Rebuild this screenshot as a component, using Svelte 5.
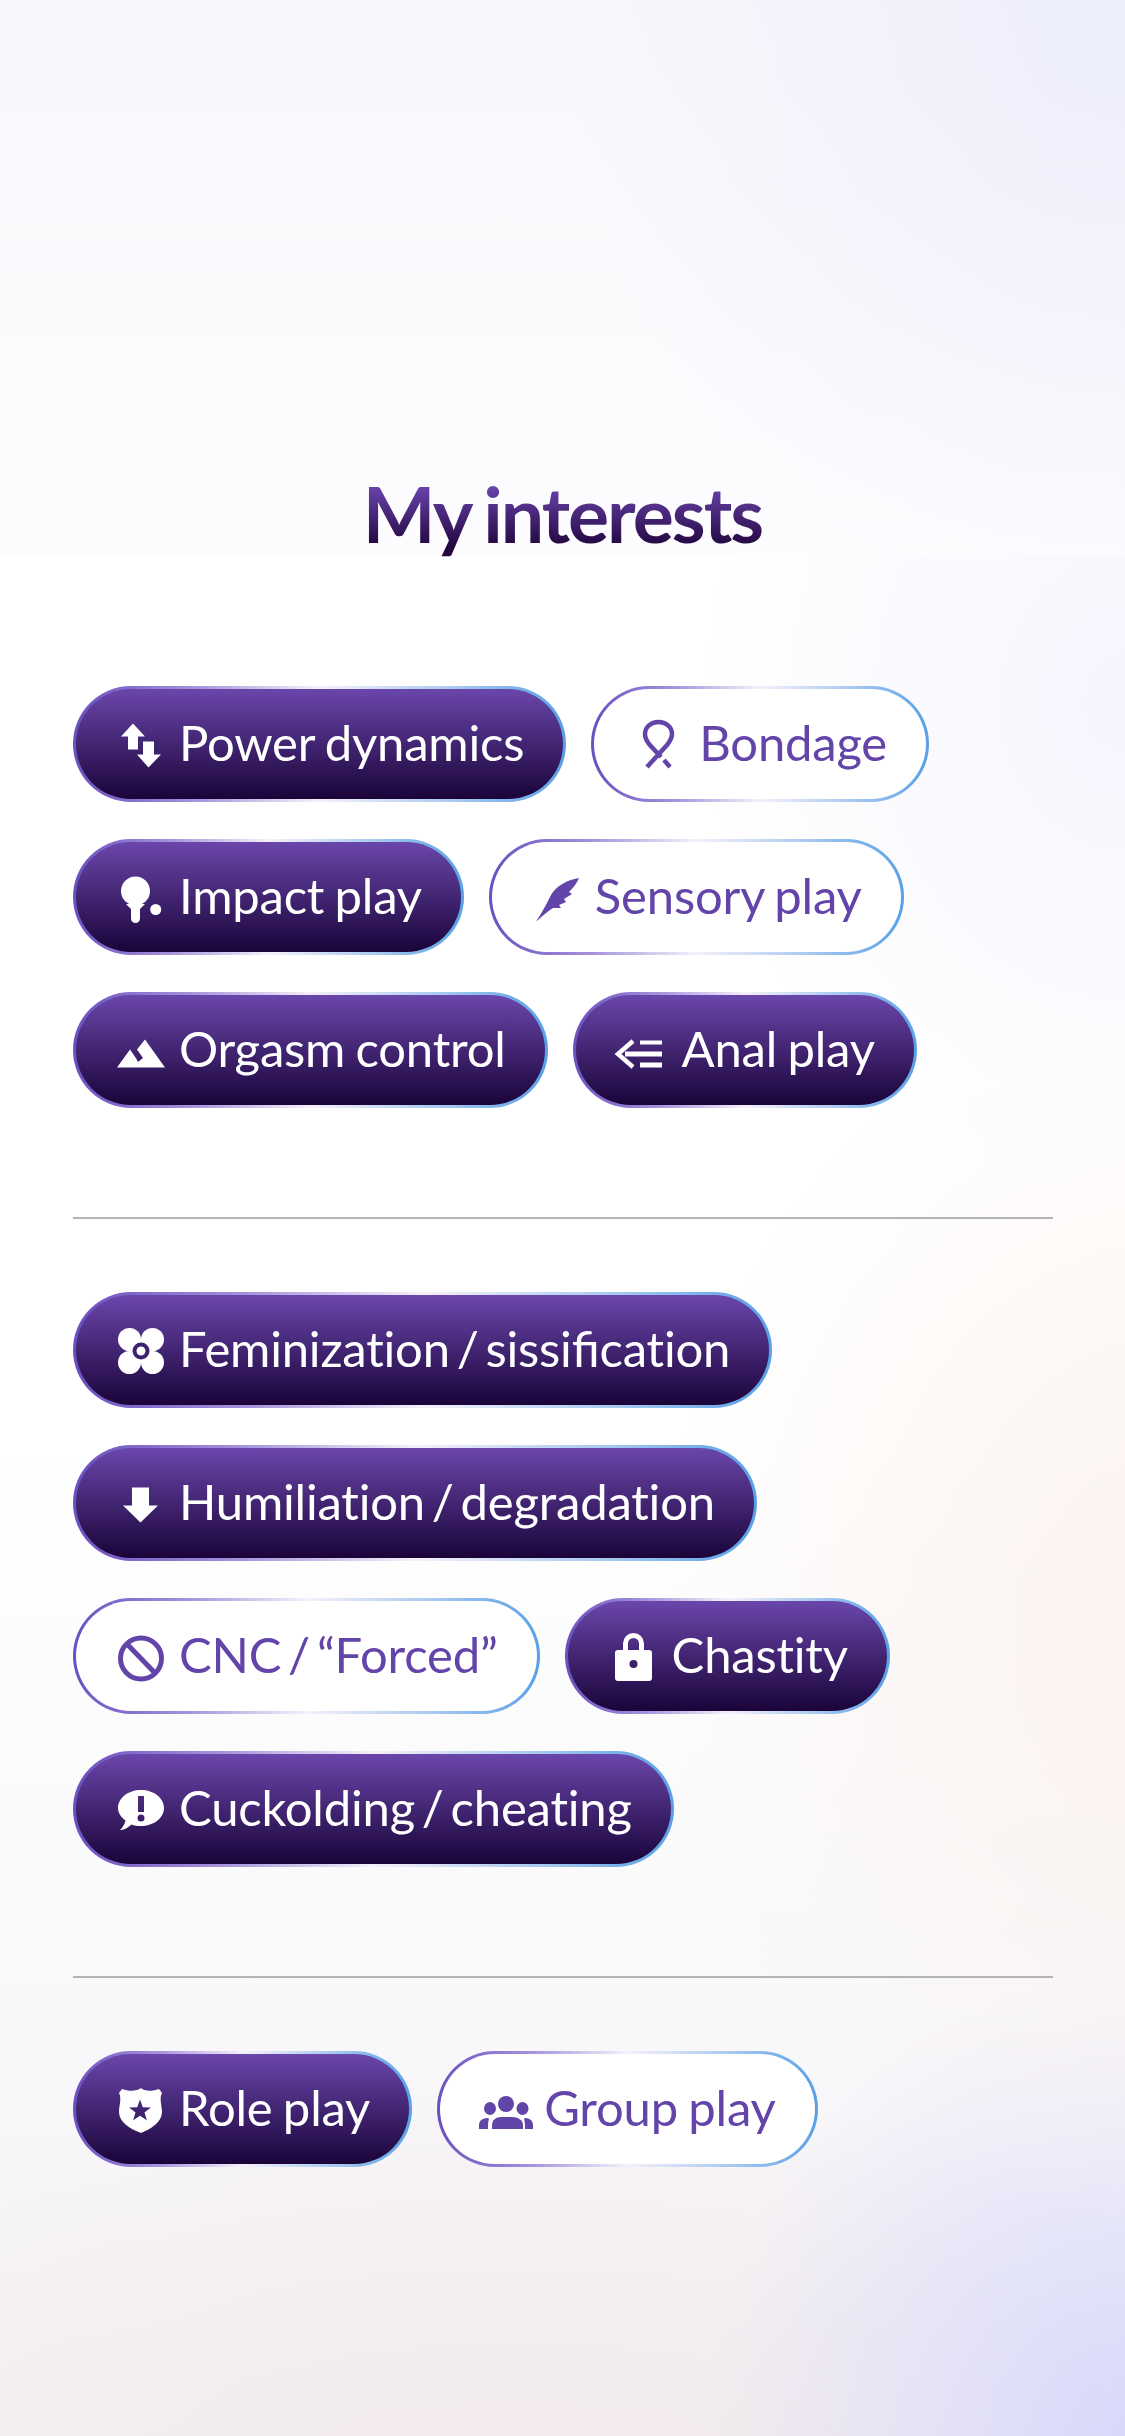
<script>
	const sections = [
		[
			{ label: 'Power dynamics', icon: 'power', w: 50, on: true },
			{ label: 'Bondage', icon: 'ribbon', w: 52, on: false },
			{ label: 'Impact play', icon: 'paddle', w: 50, on: true },
			{ label: 'Sensory play', icon: 'feather', w: 50, on: false },
			{ label: 'Orgasm control', icon: 'peaks', w: 50, on: true },
			{ label: 'Anal play', icon: 'anal', w: 53, on: true }
		],
		[
			{ label: 'Feminization / sissiﬁcation', icon: 'flower', w: 50, on: true },
			{ label: 'Humiliation / degradation', icon: 'down', w: 50, on: true },
			{ label: 'CNC / “Forced”', icon: 'ban', w: 50, on: false },
			{ label: 'Chastity', icon: 'lock', w: 51, on: true },
			{ label: 'Cuckolding / cheating', icon: 'bubble', w: 50, on: true }
		],
		[
			{ label: 'Role play', icon: 'shield', w: 50, on: true },
			{ label: 'Group play', icon: 'group', w: 51, on: false }
		]
	];
</script>

{#snippet glyph(name)}
	{#if name === 'power'}
		<path d="M18 4.5 30 17.5H23V30.5H13V17.5H6ZM28 22.5H39V35.5H46L33.5 48.5 22 35.5H28Z" />
	{:else if name === 'ribbon'}
		<path class="line" d="M14 48 34 26C38 21 39 18 39 15 39 8 33 3 25.5 3 18 3 12 8 12 15 12 18 13 21 16 25L28 38M31 41 37 48" />
	{:else if name === 'paddle'}
		<circle cx="20.5" cy="19" r="14.5" />
		<path d="M11 32H30L25 37V46.5A4.5 4.5 0 0 1 16 46.5V37Z" />
		<circle cx="40.7" cy="37.5" r="5.5" />
	{:else if name === 'feather'}
		<path d="M48 6C36 8 24 14 19 25 15 33 10 42 5 49.5 12 44 18 38 22 36L30 36 28 33 35 30 33 27 41 22 38 20C42 16 46 11 48 6Z" />
	{:else if name === 'peaks'}
		<path d="M2 42.5 15 24.5 21.5 34 23 37 28 33 22 24.5 30 14.5 50 42.5Z" />
	{:else if name === 'anal'}
		<path class="line" d="M18 16 3 29 18 42" />
		<path d="M25 15.5H47V19.5H25ZM10 26.5H47V31.5H10ZM25 37.5H47V42.5H25Z" />
	{:else if name === 'flower'}
		<circle cx="14.5" cy="14.5" r="11.5" />
		<circle cx="37.5" cy="14.5" r="11.5" />
		<circle cx="14.5" cy="37.5" r="11.5" />
		<circle cx="37.5" cy="37.5" r="11.5" />
		<circle cx="26" cy="26" r="12" />
		<circle class="ring" cx="26" cy="26" r="6.5" />
	{:else if name === 'down'}
		<path d="M17 9.5H34V27.5H43L25.5 44.5 8 27.5H17Z" />
	{:else if name === 'ban'}
		<circle class="line ban" cx="26" cy="27.5" r="20.5" />
		<path class="line ban" d="M12 13 40 42" />
	{:else if name === 'lock'}
		<path class="line lockbar" d="M18.5 20V12.5A8 8 0 0 1 34.5 12.5V20" />
		<path fill-rule="evenodd" d="M11 19H42A3 3 0 0 1 45 22V47A3 3 0 0 1 42 50H11A3 3 0 0 1 8 47V22A3 3 0 0 1 11 19ZM26.5 29A4 4 0 1 0 26.5 37 4 4 0 1 0 26.5 29Z" />
	{:else if name === 'bubble'}
		<path fill-rule="evenodd" d="M26 6C38.7 6 49 14 49 24 49 34 38.7 42 26 42 22.5 42 19.3 41.4 16.4 40.4 13 43.5 9 46 5 46 8 43 10 39.5 10.5 36.5 6 33.2 3 28.9 3 24 3 14 13.3 6 26 6ZM23 12V28H29V12ZM26 30.5A3.5 3.5 0 1 0 26 37.5 3.5 3.5 0 1 0 26 30.5Z" />
	{:else if name === 'shield'}
		<path fill-rule="evenodd" d="M26 4C29 7 36 8 44 5L47 9C44 14 47 22 47 28 47 38 36 45 26 49 15 45 4 38 4 28 4 22 7 14 4 9L7 5C15 8 22 7 26 4ZM25 15.5 22.2 23.2 14.1 23.4 20.5 28.5 18.2 36.3 25 31.7 31.8 36.3 29.5 28.5 35.9 23.4 27.8 23.2Z" />
	{:else if name === 'group'}
		<circle cx="27" cy="20" r="8" />
		<ellipse cx="11" cy="24.5" rx="6" ry="6.5" />
		<ellipse cx="43.5" cy="24.5" rx="6" ry="6.5" />
		<path d="M13 45V41C13 36 17 33 22 33H33C39 33 44 36 44 41V45Z" />
		<path d="M0 45V41C0 37 3 34 9 34 10 34 10 35 9.5 37 9 39 9 42 9 45ZM54 45V41C54 37 51 34 46 34 45 34 45 35 45.5 37 46 39 46 42 46 45Z" />
	{/if}
{/snippet}

<main class="page">
	<header class="top">
		<h1>My interests</h1>
	</header>

	<div class="content">
		{#each sections as tags, i}
			{#if i > 0}<hr />{/if}
			<ul class="tags">
				{#each tags as tag}
					<li class="tag" class:on={tag.on}>
						<svg width={tag.w} height="50" viewBox="0 0 {tag.w} 50" aria-hidden="true">
							{@render glyph(tag.icon)}
						</svg>
						<span class:slash={tag.label.includes('/')}>{tag.label}</span>
					</li>
				{/each}
			</ul>
		{/each}
	</div>
</main>

<style>
	:global(body) {
		background: #fff;
	}
	.page {
		width: 1125px;
		height: 2436px;
		overflow: hidden;
		font-family: Lato, 'Noto Sans', sans-serif;
		background:
			radial-gradient(520px 620px at 1180px 1620px, #fbf2ee 0%, rgba(251, 242, 238, 0) 100%),
			radial-gradient(420px 460px at 1125px 2436px, #d8d9fb 0%, rgba(216, 217, 251, 0) 100%),
			radial-gradient(900px 420px at 520px 2500px, #f2e9e9 0%, rgba(242, 233, 233, 0) 100%),
			radial-gradient(420px 500px at 1125px 700px, #f5f5fe 0%, rgba(245, 245, 254, 0) 100%),
			linear-gradient(180deg, #fff 0%, #fff 60%, #f4f2f6 100%);
	}
	.top {
		height: 557px;
		box-sizing: border-box;
		padding-top: 469px;
		background:
			radial-gradient(560px 620px at 1125px 0, #edeefc 0%, rgba(237, 238, 252, 0) 100%),
			linear-gradient(180deg, #f8f7fb 0%, #fdfcfe 100%);
	}
	h1 {
		margin: 0;
		text-align: center;
		font-size: 77px;
		line-height: 88px;
		font-weight: 700;
		letter-spacing: -2px;
		word-spacing: -3px;
		color: transparent;
		background: linear-gradient(180deg, #6b45ae 18%, #22073f 88%);
		-webkit-background-clip: text;
		background-clip: text;
	}
	.content {
		padding: 129px 72px 0 73px;
	}
	.tags {
		list-style: none;
		margin: 0;
		padding: 0;
		display: flex;
		flex-wrap: wrap;
		gap: 37px 25px;
		width: 900px;
	}
	hr {
		border: 0;
		height: 2px;
		background: #b4b4b6;
		margin: 109px 0 73px;
	}
	.tag {
		box-sizing: border-box;
		height: 116px;
		padding: 0 39px;
		display: flex;
		align-items: center;
		gap: 14px;
		border: 3px solid transparent;
		border-radius: 58px;
		font-size: 49px;
		font-variant-ligatures: none;
		letter-spacing: -0.2px;
		word-spacing: -2px;
		color: #6344a9;
		fill: #6344a9;
		background:
			linear-gradient(#fff, #fff) padding-box,
			linear-gradient(90deg, #6a4fc0 0%, #a594dc 25%, #f6f0fa 50%, #a6c8f0 78%, #58a0e6 100%) border-box;
	}
	.tag span {
		padding-bottom: 4px;
	}
	.tag span.slash {
		word-spacing: -5.5px;
	}
	.tag.on {
		color: #fff;
		fill: #fff;
		background:
			linear-gradient(180deg, #6a46ab 0%, #1a0439 100%) padding-box,
			linear-gradient(90deg, #6a4fc0 0%, #a594dc 25%, #f6f0fa 50%, #a6c8f0 78%, #58a0e6 100%) border-box;
	}
	svg {
		flex: none;
		overflow: visible;
	}
	.line {
		fill: none;
		stroke: currentColor;
		stroke-width: 4.5;
	}
	.ban {
		stroke-width: 5;
	}
	.lockbar {
		stroke-width: 5;
	}
	.ring {
		fill: none;
		stroke: #3c2270;
		stroke-width: 4;
	}
</style>
